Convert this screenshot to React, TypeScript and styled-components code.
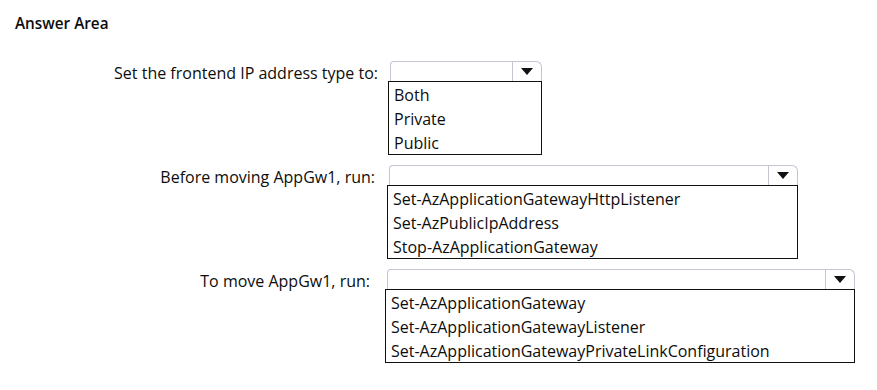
import React from "react";
import styled, { createGlobalStyle } from "styled-components";

const Global = createGlobalStyle`
  html, body { margin: 0; padding: 0; background: #ffffff; }
  body { font-family: "Open Sans", "Noto Sans", sans-serif; color: #0d0d0d; }
`;

const Page = styled.div`
  width: 877px;
  height: 390px;
  background: #ffffff;
  padding-top: 12px;
  box-sizing: border-box;
  overflow: hidden;
`;

const Title = styled.h1`
  margin: 0 0 0 15px;
  font-size: 15.3px;
  font-weight: 600;
  line-height: 22px;
  letter-spacing: 0;
`;

const Rows = styled.div`
  display: flex;
  flex-direction: column;
  gap: 10px;
  margin-top: 27px;
`;

const Row = styled.div`
  display: flex;
  align-items: flex-start;
`;

const Label = styled.div<{ $pr: number }>`
  width: 380px;
  box-sizing: border-box;
  padding-right: ${(p) => p.$pr}px;
  text-align: right;
  font-size: 16px;
  line-height: 20px;
  padding-top: 2px;
  white-space: nowrap;
`;

const Dropdown = styled.div<{ $ml: number; $w: number }>`
  margin-left: ${(p) => p.$ml}px;
  width: ${(p) => p.$w}px;
  display: flex;
  flex-direction: column;
`;

const Select = styled.div`
  margin-left: 2px;
  height: 20px;
  box-sizing: border-box;
  border: 1px solid #c4c4d2;
  border-bottom: none;
  border-radius: 4px 6px 0 0;
  display: flex;
  justify-content: flex-end;
`;

const ArrowCell = styled.div`
  width: 28px;
  border-left: 1px solid #c4c4d2;
  display: flex;
  align-items: center;
  justify-content: center;
`;

const List = styled.ul`
  list-style: none;
  margin: 0;
  padding: 0;
  border: 1px solid #111111;
`;

const Option = styled.li`
  font-size: 16px;
  line-height: 22px;
  height: 24px;
  padding-left: 5px;
  padding-top: 2px;
  box-sizing: border-box;
  white-space: nowrap;
`;

const Arrow = () => (
  <svg width="12" height="7" viewBox="0 0 12 7">
    <polygon points="0,0 12,0 6,7" fill="#111" />
  </svg>
);

const data = [
  {
    label: "Set the frontend IP address type to:",
    pr: 2,
    ml: 8,
    w: 154,
    options: ["Both", "Private", "Public"],
  },
  {
    label: "Before moving AppGw1, run:",
    pr: 5,
    ml: 7,
    w: 411,
    options: [
      "Set-AzApplicationGatewayHttpListener",
      "Set-AzPublicIpAddress",
      "Stop-AzApplicationGateway",
    ],
  },
  {
    label: "To move AppGw1, run:",
    pr: 10,
    ml: 5,
    w: 470,
    options: [
      "Set-AzApplicationGateway",
      "Set-AzApplicationGatewayListener",
      "Set-AzApplicationGatewayPrivateLinkConfiguration",
    ],
  },
];

export default function App() {
  return (
    <Page>
      <Global />
      <Title>Answer Area</Title>
      <Rows>
        {data.map((r) => (
          <Row key={r.label}>
            <Label $pr={r.pr}>{r.label}</Label>
            <Dropdown $ml={r.ml} $w={r.w}>
              <Select>
                <ArrowCell>
                  <Arrow />
                </ArrowCell>
              </Select>
              <List>
                {r.options.map((o) => (
                  <Option key={o}>{o}</Option>
                ))}
              </List>
            </Dropdown>
          </Row>
        ))}
      </Rows>
    </Page>
  );
}
